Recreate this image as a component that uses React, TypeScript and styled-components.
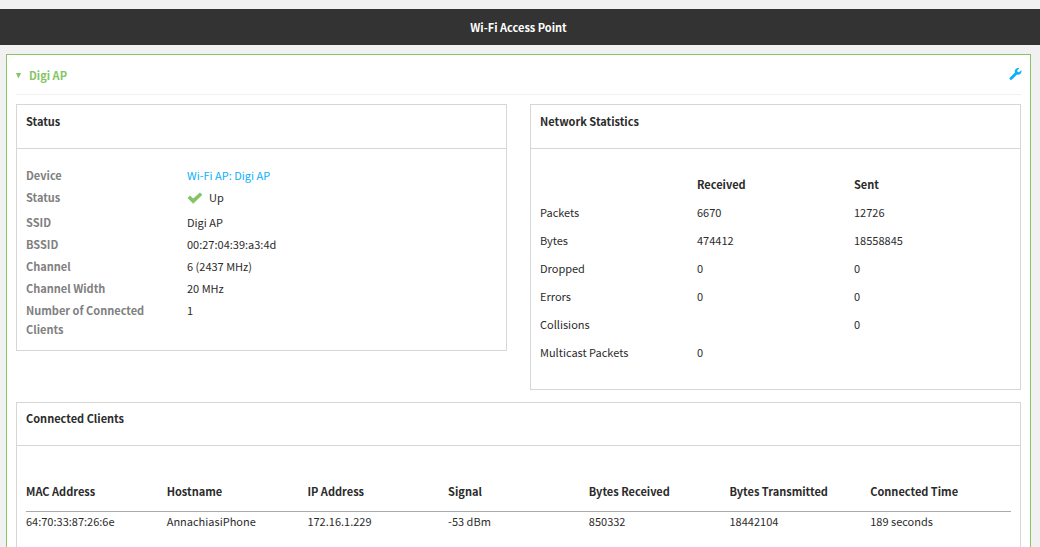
import React from 'react';
import styled, { createGlobalStyle } from 'styled-components';

const GlobalStyle = createGlobalStyle`
  *, *::before, *::after { box-sizing: border-box; }
  body {
    margin: 0;
    padding-top: 9px;
    background: #f1f1f1;
    color: #2b2b2b;
    font-family: "Noto Sans CJK SC", "Noto Sans", sans-serif;
    font-size: 11px;
    line-height: 19px;
  }
`;

const TitleBar = styled.header`
  display: flex;
  align-items: center;
  justify-content: center;
  height: 36px;
  padding-right: 3px;
  background: #333;
`;

const PageTitle = styled.h1`
  margin: 0;
  color: #fff;
  font-size: 11px;
  font-weight: 700;
`;

const Panel = styled.main`
  margin: 9px 9px 0 6px;
  padding: 0 9px 24px;
  border: 1px solid #84c465;
  background: #fff;
`;

const PanelHeader = styled.div`
  display: flex;
  align-items: center;
  justify-content: space-between;
  height: 40px;
  margin-bottom: 9px;
  border-bottom: 1px solid #f1f1f1;
`;

const PlainButton = styled.button`
  display: flex;
  align-items: center;
  padding: 0;
  border: 0;
  background: none;
  font: inherit;
  cursor: pointer;
`;

const PanelToggle = styled(PlainButton)`
  gap: 8px;
  padding-top: 2px;
  color: #84c465;
  font-weight: 700;
`;

const SettingsButton = styled(PlainButton)`
  color: #0db0fa;
  margin-right: -1px;
  padding-bottom: 2px;
`;

const CardRow = styled.div`
  display: flex;
  align-items: flex-start;
  gap: 23px;
  margin-bottom: 12px;
`;

const Card = styled.section`
  flex: 1;
  min-width: 0;
  border: 1px solid #d6d6d6;
`;

const CardTitle = styled.h2<{ $compact?: boolean }>`
  margin: 0;
  padding: ${({ $compact }) => ($compact ? '6px 9px 17px' : '7px 9px 17px')};
  border-bottom: 1px solid #d6d6d6;
  font-size: 11px;
  font-weight: 700;
`;

const StatusList = styled.dl`
  display: grid;
  grid-template-columns: 128px 1fr;
  column-gap: 33px;
  row-gap: 3px;
  margin: 0;
  padding: 17px 9px 11px;
`;

const Term = styled.dt`
  color: #808080;
  font-weight: 700;
`;

const Value = styled.dd`
  margin: 0;
`;

const StateValue = styled(Value)`
  display: flex;
  gap: 6px;
  height: 22px;

  svg { margin-top: 4px; }
`;

const DeviceLink = styled.a`
  color: #0db0fa;
  text-decoration: none;
`;

const DataTable = styled.table`
  width: 100%;
  border-collapse: collapse;
  table-layout: fixed;

  th, td {
    padding: 0;
    text-align: left;
    font-weight: 400;
  }
  thead th { font-weight: 700; }
`;

const StatsBody = styled.div`
  padding: 21px 9px 23px;
  tr { height: 28px; }
`;

const ClientsBody = styled.div`
  padding: 26px 9px 39px;
  thead tr { height: 39px; border-bottom: 1px solid #aaa; }
  tbody tr { height: 21px; }
`;

const CheckIcon = () => (
  <svg width="16" height="12" viewBox="0 0 16 12" aria-hidden="true">
    <path d="M.6 6 3 3.6 6.2 6.6 13 .4 15.4 2.8 6.2 11.8Z" fill="#84c465" />
  </svg>
);

const WrenchIcon = () => (
  <svg width="13" height="12" viewBox="0 0 512 512" fill="currentColor" aria-hidden="true">
    <path d="M507.73 109.1c-2.24-9.03-13.54-12.09-20.12-5.51l-74.36 74.36-67.88-11.31-11.31-67.88 74.36-74.36c6.62-6.62 3.43-17.9-5.66-20.16-47.38-11.74-99.55.91-136.58 37.93-39.64 39.64-50.55 97.1-34.05 147.2L18.74 402.76c-24.99 24.99-24.99 65.51 0 90.5 24.99 24.99 65.51 24.99 90.5 0l213.21-213.21c50.12 16.71 107.47 5.68 147.37-34.22 37.07-37.07 49.7-89.32 37.91-136.73z" />
  </svg>
);

const CaretIcon = () => (
  <svg width="5" height="6" viewBox="0 0 5 6" aria-hidden="true">
    <path d="M0 0H5L2.5 5.5Z" fill="currentColor" />
  </svg>
);

const details = [
  ['SSID', 'Digi AP'],
  ['BSSID', '00:27:04:39:a3:4d'],
  ['Channel', '6 (2437 MHz)'],
  ['Channel Width', '20 MHz'],
  ['Number of Connected Clients', '1'],
];

const stats = [
  ['Packets', '6670', '12726'],
  ['Bytes', '474412', '18558845'],
  ['Dropped', '0', '0'],
  ['Errors', '0', '0'],
  ['Collisions', '', '0'],
  ['Multicast Packets', '0', ''],
];

const clientColumns = [
  'MAC Address',
  'Hostname',
  'IP Address',
  'Signal',
  'Bytes Received',
  'Bytes Transmitted',
  'Connected Time',
];

const clients = [
  ['64:70:33:87:26:6e', 'AnnachiasiPhone', '172.16.1.229', '-53 dBm', '850332', '18442104', '189 seconds'],
];

export default function App() {
  return (
    <>
      <GlobalStyle />
      <TitleBar>
        <PageTitle>Wi-Fi Access Point</PageTitle>
      </TitleBar>
      <Panel>
        <PanelHeader>
          <PanelToggle type="button" aria-expanded="true">
            <CaretIcon />
            Digi AP
          </PanelToggle>
          <SettingsButton type="button" aria-label="Configure">
            <WrenchIcon />
          </SettingsButton>
        </PanelHeader>
        <CardRow>
          <Card>
            <CardTitle>Status</CardTitle>
            <StatusList>
              <Term>Device</Term>
              <Value>
                <DeviceLink href="#device">Wi-Fi AP: Digi AP</DeviceLink>
              </Value>
              <Term>Status</Term>
              <StateValue>
                <CheckIcon />
                Up
              </StateValue>
              {details.map(([label, value]) => (
                <React.Fragment key={label}>
                  <Term>{label}</Term>
                  <Value>{value}</Value>
                </React.Fragment>
              ))}
            </StatusList>
          </Card>
          <Card>
            <CardTitle>Network Statistics</CardTitle>
            <StatsBody>
              <DataTable>
                <thead>
                  <tr>
                    <td />
                    <th scope="col">Received</th>
                    <th scope="col">Sent</th>
                  </tr>
                </thead>
                <tbody>
                  {stats.map(([name, received, sent]) => (
                    <tr key={name}>
                      <th scope="row">{name}</th>
                      <td>{received}</td>
                      <td>{sent}</td>
                    </tr>
                  ))}
                </tbody>
              </DataTable>
            </StatsBody>
          </Card>
        </CardRow>
        <Card>
          <CardTitle $compact>Connected Clients</CardTitle>
          <ClientsBody>
            <DataTable>
              <thead>
                <tr>
                  {clientColumns.map((name) => (
                    <th key={name} scope="col">{name}</th>
                  ))}
                </tr>
              </thead>
              <tbody>
                {clients.map((client) => (
                  <tr key={client[0]}>
                    {client.map((cell, i) => (
                      <td key={clientColumns[i]}>{cell}</td>
                    ))}
                  </tr>
                ))}
              </tbody>
            </DataTable>
          </ClientsBody>
        </Card>
      </Panel>
    </>
  );
}
